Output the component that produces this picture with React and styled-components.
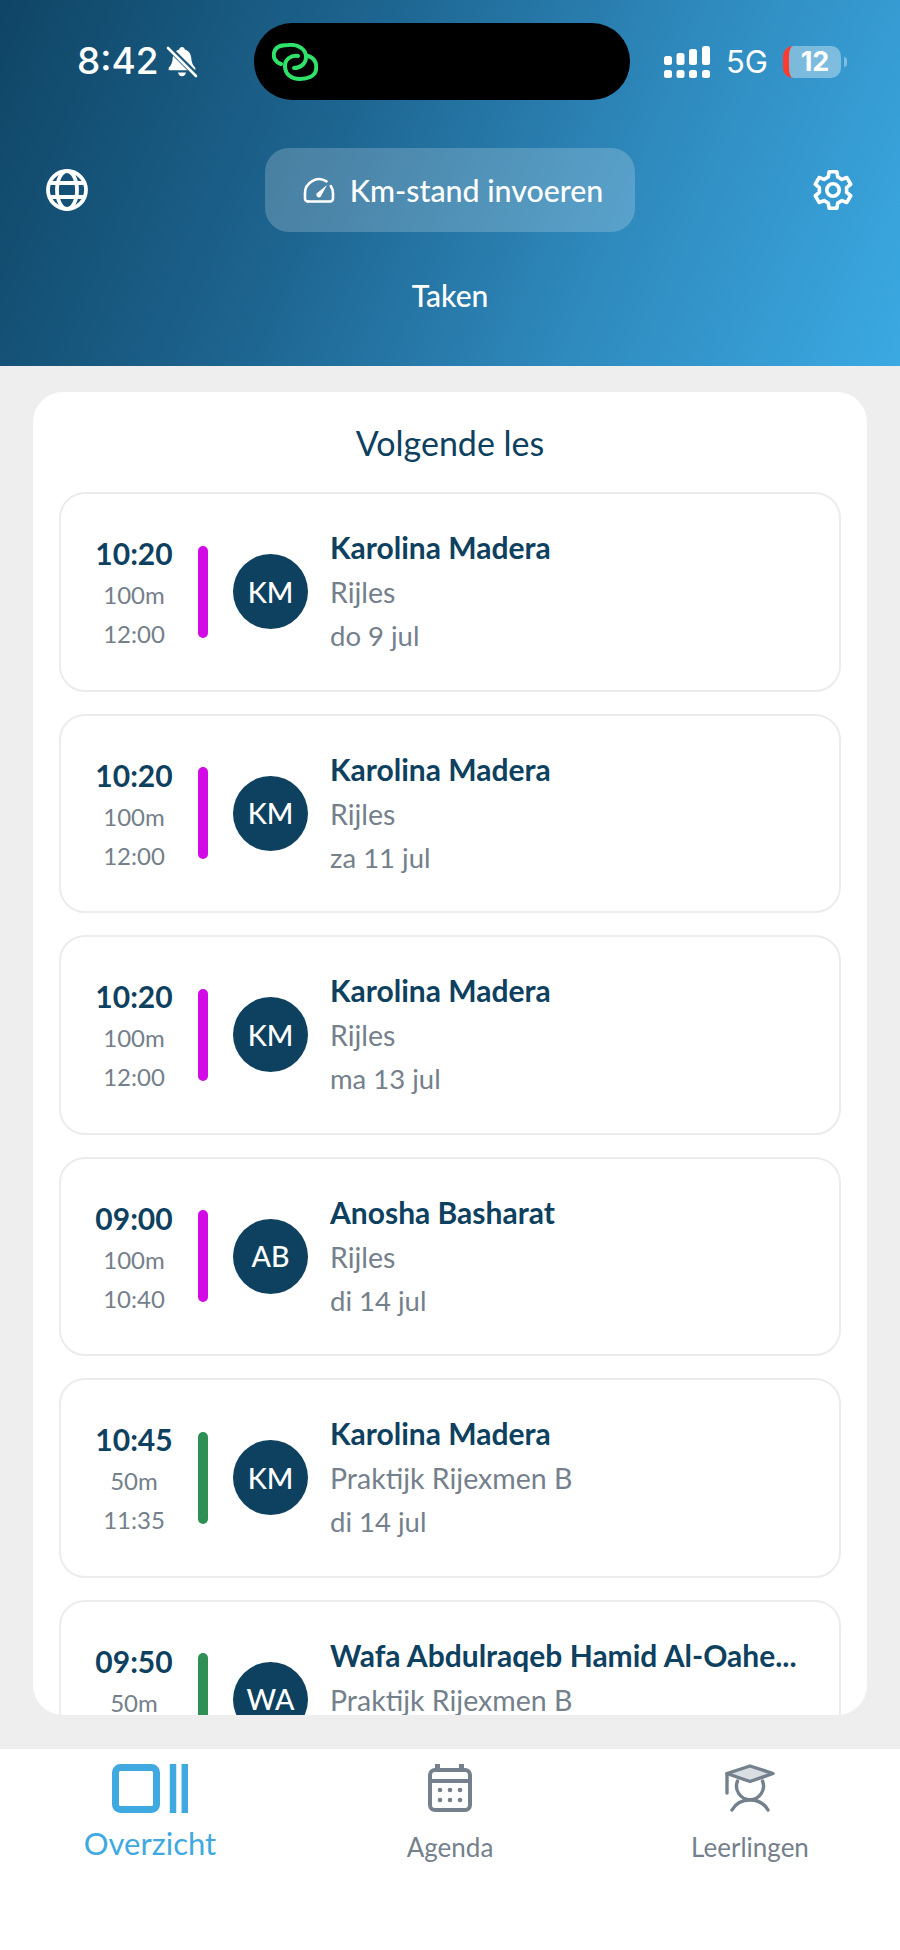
import React from 'react'
import styled, { createGlobalStyle } from 'styled-components'

const GlobalStyle = createGlobalStyle`
  html, body {
    margin: 0;
    padding: 0;
    background: #eeeeee;
  }
  * {
    box-sizing: border-box;
  }
`

const Page = styled.div`
  width: 900px;
  height: 1950px;
  display: flex;
  flex-direction: column;
  overflow: hidden;
  background: #eeeeee;
  font-family: Lato, "Open Sans", sans-serif;
`

const Header = styled.header`
  height: 366px;
  flex: none;
  padding-top: 23px;
  color: #fff;
  background: linear-gradient(112deg, #0f4565 0%, #1e6692 38%, #2f8abd 68%, #3ba9e2 100%);
`

const StatusBar = styled.div`
  height: 77px;
  display: grid;
  grid-template-columns: 254px 376px 1fr;
  align-items: center;
`

const StatusLeft = styled.div`
  display: flex;
  align-items: center;
  gap: 7px;
  padding-left: 77px;
`

const Clock = styled.span`
  margin-top: -2px;
  font-family: Inter, sans-serif;
  font-size: 37px;
  font-weight: 500;
  line-height: 1;
`

const Island = styled.div`
  height: 77px;
  padding-left: 18px;
  display: flex;
  align-items: center;
  background: #000;
  border-radius: 38px;
`

const StatusRight = styled.div`
  display: flex;
  align-items: center;
  padding-left: 34px;
`

const Network = styled.span`
  margin-left: 15px;
  font-family: Inter, sans-serif;
  font-size: 31px;
  font-weight: 400;
  line-height: 1;
`

const Battery = styled.div`
  width: 58px;
  height: 32px;
  margin-left: 15px;
  display: flex;
  align-items: center;
  justify-content: center;
  overflow: hidden;
  border-radius: 10px;
  border-left: 6px solid #ff3b30;
  background: rgba(255, 255, 255, 0.36);
  font-family: Inter, sans-serif;
  font-size: 27px;
  font-weight: 700;
  line-height: 1;
`

const BatteryNub = styled.div`
  width: 3px;
  height: 10px;
  margin-left: 3px;
  border-radius: 0 3px 3px 0;
  background: rgba(255, 255, 255, 0.36);
`

const ActionRow = styled.div`
  height: 84px;
  margin-top: 48px;
  padding: 0 46px;
  display: flex;
  align-items: center;
  justify-content: space-between;
`

const KmButton = styled.button`
  width: 370px;
  height: 84px;
  padding: 0 0 0 6px;
  display: flex;
  align-items: center;
  justify-content: center;
  gap: 15px;
  border: 0;
  border-radius: 24px;
  background: rgba(255, 255, 255, 0.2);
  color: #fff;
  font-family: Lato, sans-serif;
  font-size: 30.3px;
  font-weight: 500;
`

const HeaderTitle = styled.div`
  margin-top: 45px;
  text-align: center;
  font-size: 30px;
  font-weight: 500;
  line-height: 36px;
`

const Panel = styled.section`
  height: 1323px;
  flex: none;
  margin: 26px 33px 34px;
  padding: 0 26px;
  overflow: hidden;
  background: #fff;
  border-radius: 30px;
`

const PanelTitle = styled.h2`
  height: 100px;
  margin: 0;
  display: flex;
  align-items: center;
  justify-content: center;
  color: #0e4160;
  font-size: 34px;
  font-weight: 400;
`

const CardList = styled.div`
  display: flex;
  flex-direction: column;
  gap: 22px;
`

const Card = styled.article`
  height: 199.5px;
  flex: none;
  padding-left: 23px;
  display: flex;
  align-items: center;
  background: #fff;
  border: 2px solid #ececec;
  border-radius: 26px;
`

const TimeCol = styled.div`
  width: 100px;
  flex: none;
  padding-top: 1px;
  display: flex;
  flex-direction: column;
  align-items: center;
`

const StartTime = styled.div`
  color: #0e4160;
  font-size: 30px;
  font-weight: 700;
  line-height: 38px;
`

const SubTime = styled.div`
  margin-top: 7px;
  color: #74808b;
  font-size: 24px;
  font-weight: 400;
  line-height: 32px;
`

const Bar = styled.div`
  width: 10px;
  height: 92px;
  margin-left: 14px;
  flex: none;
  border-radius: 5px;
  background: ${(p) => p.$color};
`

const Avatar = styled.div`
  width: 75px;
  height: 75px;
  margin-left: 25px;
  flex: none;
  display: flex;
  align-items: center;
  justify-content: center;
  border-radius: 50%;
  background: #0e4160;
  color: #fff;
  font-size: 28.5px;
  font-weight: 500;
`

const Info = styled.div`
  margin-left: 22px;
  min-width: 0;
  display: flex;
  flex-direction: column;
  gap: 8px;
`

const Name = styled.div`
  margin-bottom: 1px;
  color: #0e4160;
  font-size: 30px;
  font-weight: 700;
  line-height: 36px;
  white-space: nowrap;
`

const Detail = styled.div`
  color: #74808b;
  font-size: ${(p) => p.$size}px;
  font-weight: 400;
  line-height: 36px;
  white-space: nowrap;
`

const TabBar = styled.nav`
  flex: 1;
  padding-top: 15px;
  display: grid;
  grid-template-columns: repeat(3, 300px);
  background: #fff;
`

const Tab = styled.div`
  display: flex;
  flex-direction: column;
  align-items: center;
  color: ${(p) => (p.$active ? '#3fa9e0' : '#74808b')};
`

const TabLabel = styled.span`
  margin-top: ${(p) => (p.$active ? 13 : 18)}px;
  font-size: ${(p) => (p.$active ? 31 : 26)}px;
  line-height: 34px;
`

const BellOffIcon = () => (
  <svg width="32" height="33" viewBox="0 0 32 33" fill="none">
    <path d="M16 2c1.500 0 2.600 1 2.800 2.400 4 1.100 6.200 4.400 6.500 8.800.3 4 1.300 6.800 4 9.500v2.500H2.700v-2.500c2.800-2.700 3.700-5.500 4-9.500.3-4.400 2.600-7.700 6.500-8.800C13.400 3 14.500 2 16 2z" fill="#fff" />
    <path d="M12 27.500h8c-.4 2.200-2 3.700-4 3.700s-3.600-1.500-4-3.700z" fill="#fff" />
    <path d="M2.500 2.500l28 28" stroke="#175579" strokeWidth="5.500" />
    <path d="M2 3l28 28" stroke="#fff" strokeWidth="2.600" strokeLinecap="round" />
  </svg>
)

const LinkLogo = () => (
  <svg width="46" height="38" viewBox="0 0 46 38" fill="none" stroke="#2fe26a" strokeWidth="4" strokeLinecap="round" strokeLinejoin="round">
    <path d="M9 21C3 19 1 14 2 10 3 3 10 2 16 2c10-1 18 4 18 12 0 7-6 11-12 11" />
    <path d="M36 13c7 2 9 8 8 14-1 6-8 9-16 9-9 0-15-5-15-13 0-7 6-11 13-10" />
  </svg>
)

const SignalIcon = () => (
  <svg width="47" height="32" viewBox="0 0 47 32" fill="#fff">
    <rect x="0" y="10" width="8" height="9" rx="2.500" />
    <rect x="12.500" y="7" width="8" height="12" rx="2.500" />
    <rect x="25" y="3" width="8" height="16" rx="2.500" />
    <rect x="38" y="0" width="8" height="19" rx="2.500" />
    <rect x="0" y="24" width="8" height="8" rx="2.500" />
    <rect x="12.500" y="24" width="8" height="8" rx="2.500" />
    <rect x="25" y="24" width="8" height="8" rx="2.500" />
    <rect x="38" y="24" width="8" height="8" rx="2.500" />
  </svg>
)

const GlobeIcon = () => (
  <svg width="42" height="42" viewBox="0 0 42 42" fill="none" stroke="#fff" strokeWidth="3.800">
    <circle cx="21" cy="21" r="19" />
    <ellipse cx="21" cy="21" rx="10" ry="19" />
    <path d="M4.500 14h33M4.500 28h33" />
  </svg>
)

// six teeth, the first one pointing straight up
const gearPoints = () => {
  const pts = []
  const at = (deg, r) => {
    const rad = (deg * Math.PI) / 180
    return `${(22 + r * Math.cos(rad)).toFixed(2)},${(22 + r * Math.sin(rad)).toFixed(2)}`
  }
  for (let i = 0; i < 6; i++) {
    const a = -90 + i * 60
    pts.push(at(a - 20, 14.5), at(a - 12, 19.5), at(a + 12, 19.5), at(a + 20, 14.5))
  }
  return pts.join(' ')
}

const GearIcon = () => (
  <svg width="42" height="44" viewBox="0 0 44 44" fill="none" stroke="#fff" strokeWidth="3.800" strokeLinejoin="round">
    <polygon points={gearPoints()} />
    <circle cx="22" cy="22" r="6.500" />
  </svg>
)

const GaugeIcon = () => (
  <svg width="32" height="26" viewBox="0 0 32 26" fill="none" stroke="#fff" strokeWidth="2.600" strokeLinecap="round" strokeLinejoin="round">
    <path d="M5 24.500h22a3 3 0 0 0 3-3v-5c0-2.800-.8-5.400-2.200-7.500" />
    <path d="M23.500 4.400A14 14 0 0 0 2 16.500v5a3 3 0 0 0 3 3" />
    <path d="M13.500 16.500 24 8l-6.500 12a2.800 2.800 0 0 1-4-3.500z" fill="#fff" stroke="none" />
  </svg>
)

const OverviewIcon = () => (
  <svg width="76" height="49" viewBox="0 0 76 49" fill="none" stroke="#3fa9e0" strokeWidth="7">
    <rect x="3.500" y="3.500" width="41" height="42" rx="5" />
    <path d="M61 0v49" strokeWidth="6.500" />
    <path d="M72.800 0v49" strokeWidth="6.500" />
  </svg>
)

const CalendarIcon = () => (
  <svg width="44" height="48" viewBox="0 0 44 48" fill="none">
    <path d="M9.500 0v8M33.500 0v8" stroke="#74808b" strokeWidth="5" />
    <rect x="2" y="6" width="40" height="40" rx="5" stroke="#74808b" strokeWidth="4" />
    <path d="M2 17h40" stroke="#74808b" strokeWidth="4" />
    <g fill="#74808b">
      <circle cx="12" cy="26" r="2.300" />
      <circle cx="22" cy="26" r="2.300" />
      <circle cx="32" cy="26" r="2.300" />
      <circle cx="12" cy="36" r="2.300" />
      <circle cx="22" cy="36" r="2.300" />
      <circle cx="32" cy="36" r="2.300" />
    </g>
  </svg>
)

const StudentIcon = () => (
  <svg width="50" height="48" viewBox="0 0 50 48" fill="none" stroke="#74808b" strokeWidth="3.400" strokeLinecap="round" strokeLinejoin="round">
    <path d="M25 2 48 9.500 25 17.500 2 9.500z" fill="#d9dee2" />
    <path d="M2 9.500V29" />
    <path d="M12.500 17A13.500 13.500 0 1 0 37.500 17" />
    <path d="M7 46c4-7 11-10 18-10s14 3 18 10" />
  </svg>
)

const lessons = [
  { start: '10:20', length: '100m', end: '12:00', color: '#d20ae6', initials: 'KM', name: 'Karolina Madera', type: 'Rijles', date: 'do 9 jul' },
  { start: '10:20', length: '100m', end: '12:00', color: '#d20ae6', initials: 'KM', name: 'Karolina Madera', type: 'Rijles', date: 'za 11 jul' },
  { start: '10:20', length: '100m', end: '12:00', color: '#d20ae6', initials: 'KM', name: 'Karolina Madera', type: 'Rijles', date: 'ma 13 jul' },
  { start: '09:00', length: '100m', end: '10:40', color: '#d20ae6', initials: 'AB', name: 'Anosha Basharat', type: 'Rijles', date: 'di 14 jul' },
  { start: '10:45', length: '50m', end: '11:35', color: '#2e9056', initials: 'KM', name: 'Karolina Madera', type: 'Praktijk Rijexmen B', date: 'di 14 jul' },
  { start: '09:50', length: '50m', end: '10:40', color: '#2e9056', initials: 'WA', name: 'Wafa Abdulraqeb Hamid Al-Oahe...', type: 'Praktijk Rijexmen B', date: 'wo 15 jul' },
]

export default function App() {
  return (
    <Page>
      <GlobalStyle />
      <Header>
        <StatusBar>
          <StatusLeft>
            <Clock>8:42</Clock>
            <BellOffIcon />
          </StatusLeft>
          <Island>
            <LinkLogo />
          </Island>
          <StatusRight>
            <SignalIcon />
            <Network>5G</Network>
            <Battery>12</Battery>
            <BatteryNub />
          </StatusRight>
        </StatusBar>
        <ActionRow>
          <GlobeIcon />
          <KmButton>
            <GaugeIcon />
            Km-stand invoeren
          </KmButton>
          <GearIcon />
        </ActionRow>
        <HeaderTitle>Taken</HeaderTitle>
      </Header>

      <Panel>
        <PanelTitle>Volgende les</PanelTitle>
        <CardList>
          {lessons.map((l, i) => (
            <Card key={i}>
              <TimeCol>
                <StartTime>{l.start}</StartTime>
                <SubTime>{l.length}</SubTime>
                <SubTime>{l.end}</SubTime>
              </TimeCol>
              <Bar $color={l.color} />
              <Avatar>{l.initials}</Avatar>
              <Info>
                <Name>{l.name}</Name>
                <Detail $size={28.5}>{l.type}</Detail>
                <Detail $size={27.5}>{l.date}</Detail>
              </Info>
            </Card>
          ))}
        </CardList>
      </Panel>

      <TabBar>
        <Tab $active>
          <OverviewIcon />
          <TabLabel $active>Overzicht</TabLabel>
        </Tab>
        <Tab>
          <CalendarIcon />
          <TabLabel>Agenda</TabLabel>
        </Tab>
        <Tab>
          <StudentIcon />
          <TabLabel>Leerlingen</TabLabel>
        </Tab>
      </TabBar>
    </Page>
  )
}
